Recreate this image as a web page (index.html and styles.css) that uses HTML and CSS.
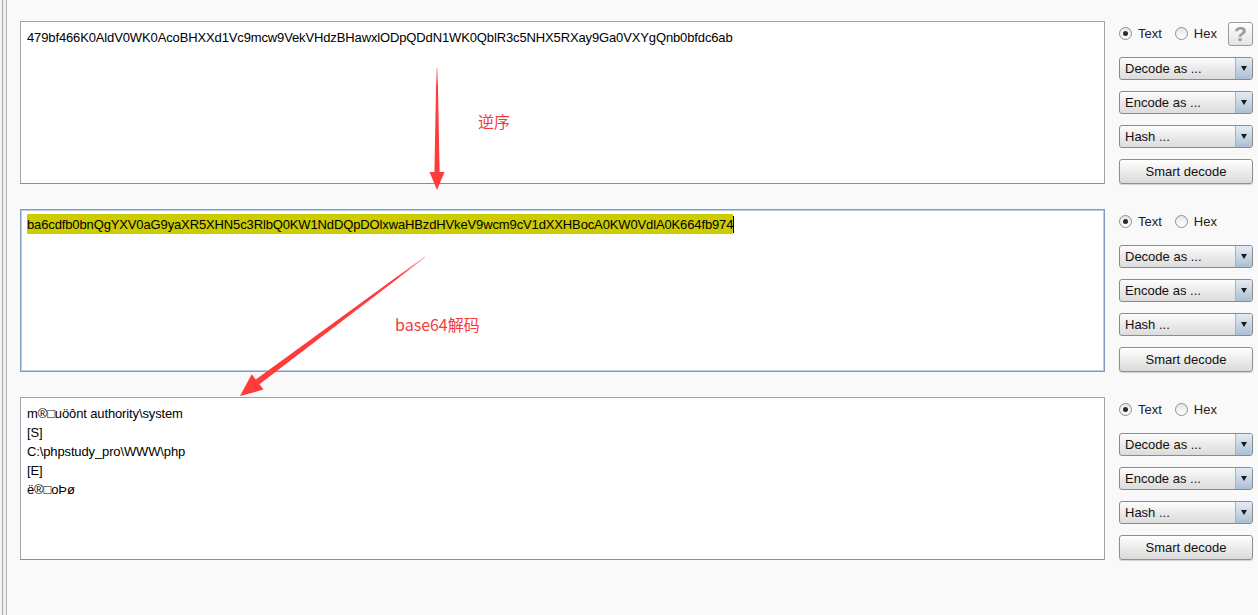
FILE: index.html
```html
<!DOCTYPE html>
<html lang="en">
<head>
    <meta charset="UTF-8">
    <title>Decoder</title>
    <link rel="stylesheet" href="styles.css">
</head>
<body>
    <div class="decoder">
        <div class="panel">
            <div class="text-box">479bf466K0AldV0WK0AcoBHXXd1Vc9mcw9VekVHdzBHawxlODpQDdN1WK0QblR3c5NHX5RXay9Ga0VXYgQnb0bfdc6ab</div>
            <div class="controls">
                <div class="mode-row">
                    <label class="radio checked"><span class="dot"></span>Text</label>
                    <label class="radio"><span class="dot"></span>Hex</label>
                    <button class="help-button">?</button>
                </div>
                <div class="select">Decode as ...<span class="select-arrow"></span></div>
                <div class="select">Encode as ...<span class="select-arrow"></span></div>
                <div class="select">Hash ...<span class="select-arrow"></span></div>
                <button class="smart-button">Smart decode</button>
            </div>
        </div>

        <div class="panel">
            <div class="text-box focused"><span class="selection">ba6cdfb0bnQgYXV0aG9yaXR5XHN5c3RlbQ0KW1NdDQpDOlxwaHBzdHVkeV9wcm9cV1dXXHBocA0KW0VdlA0K664fb974</span><span class="caret"></span></div>
            <div class="controls">
                <div class="mode-row">
                    <label class="radio checked"><span class="dot"></span>Text</label>
                    <label class="radio"><span class="dot"></span>Hex</label>
                </div>
                <div class="select">Decode as ...<span class="select-arrow"></span></div>
                <div class="select">Encode as ...<span class="select-arrow"></span></div>
                <div class="select">Hash ...<span class="select-arrow"></span></div>
                <button class="smart-button">Smart decode</button>
            </div>
        </div>

        <div class="panel">
            <div class="text-box">m®□uöônt authority\system<br>[S]<br>C:\phpstudy_pro\WWW\php<br>[E]<br>ë®□oÞø</div>
            <div class="controls">
                <div class="mode-row">
                    <label class="radio checked"><span class="dot"></span>Text</label>
                    <label class="radio"><span class="dot"></span>Hex</label>
                </div>
                <div class="select">Decode as ...<span class="select-arrow"></span></div>
                <div class="select">Encode as ...<span class="select-arrow"></span></div>
                <div class="select">Hash ...<span class="select-arrow"></span></div>
                <button class="smart-button">Smart decode</button>
            </div>
        </div>
    </div>

    <!-- red annotations drawn over the screenshot -->
    <svg class="annotations" width="1258" height="615" viewBox="0 0 1258 615">
        <defs>
            <linearGradient id="fadeTop" x1="0" y1="0" x2="0" y2="1">
                <stop offset="0" stop-color="#ff3b3b" stop-opacity="0.4"/>
                <stop offset="0.15" stop-color="#ff3b3b"/>
            </linearGradient>
            <linearGradient id="fadeTail" x1="1" y1="0" x2="0" y2="1">
                <stop offset="0" stop-color="#ff3b3b" stop-opacity="0.3"/>
                <stop offset="0.15" stop-color="#ff3b3b"/>
            </linearGradient>
        </defs>
        <polygon fill="url(#fadeTop)" points="436.4,68 437.6,68 439.6,172 444.5,172 437,190 429.5,172 434.4,172"/>
        <polygon fill="url(#fadeTail)" points="425.3,257.4 259.4,384.2 263.5,389.6 240,396 251.7,374.2 255.8,379.4 424.7,256.6"/>
    </svg>
    <div class="note note-reverse">逆序</div>
    <div class="note note-base64">base64解码</div>
</body>
</html>
```

FILE: styles.css
```css
body {
    margin: 0;
    height: 615px;
    overflow: hidden;
    font-family: "Liberation Sans", Arial, sans-serif;
    font-size: 13px;
    color: #000;
    background: linear-gradient(to right, #f2f2f2 0 2px, #a8a8a8 2px 3px, #efefef 3px 6px, #b4b4b4 6px 7px, #f9f9f9 7px);
    position: relative;
}

.decoder {
    display: flex;
    flex-direction: column;
    gap: 25px;
    padding: 21px 0 0 20px;
}

.panel {
    display: flex;
    gap: 14px;
    height: 163px;
}

.text-box {
    width: 1085px;
    box-sizing: border-box;
    background: #fff;
    border: 1px solid #a3a3a8;
    border-bottom-color: #8c8c94;
    padding: 6px 6px;
    line-height: 19px;
    letter-spacing: -0.13px;
    white-space: nowrap;
}

.text-box.focused {
    border-color: #7d9cc0;
    box-shadow: inset 0 0 0 1px #b9cce2;
    padding-top: 5px;
}

.selection {
    background: #cccc00;
    padding: 3px 0 2px;
}

.caret {
    display: inline-block;
    width: 1px;
    height: 17px;
    background: #000;
    vertical-align: -4px;
}

.controls {
    width: 134px;
    display: flex;
    flex-direction: column;
    gap: 11px;
}

.mode-row {
    height: 25px;
    display: flex;
    align-items: center;
}

.radio {
    display: flex;
    align-items: center;
    gap: 6px;
    margin-right: 13px;
    color: #222;
}

.radio + .radio {
    margin-right: 0;
}

.dot {
    width: 11px;
    height: 11px;
    border: 1px solid #8e8f8f;
    border-radius: 50%;
    background: linear-gradient(#e6e6e6, #ffffff);
    position: relative;
}

.radio.checked .dot::after {
    content: "";
    position: absolute;
    left: 3px;
    top: 3px;
    width: 5px;
    height: 5px;
    border-radius: 50%;
    background: #2b2b2b;
}

.help-button {
    margin-left: auto;
    width: 25px;
    height: 24px;
    margin-top: 1px;
    padding: 0;
    border: 1px solid #9a9a9a;
    border-radius: 3px;
    background: linear-gradient(#ffffff, #e3e3e3);
    color: #9b9b9b;
    font-family: "Liberation Sans", Arial, sans-serif;
    font-size: 21px;
    font-weight: bold;
    line-height: 20px;
}

.select {
    height: 23px;
    box-sizing: border-box;
    border: 1px solid #8b8b8b;
    border-radius: 3px;
    background: linear-gradient(#fdfdfd, #e9e9e9 55%, #dcdcdc);
    padding-left: 5px;
    line-height: 21px;
    display: flex;
    color: #111;
}

.select-arrow {
    margin-left: auto;
    width: 16px;
    border-left: 1px solid #a5b3c2;
    border-radius: 0 2px 2px 0;
    background: linear-gradient(#e4ecf4, #aabfd4);
    position: relative;
}

.select-arrow::after {
    content: "";
    position: absolute;
    left: 4.5px;
    top: 8px;
    border-left: 3.5px solid transparent;
    border-right: 3.5px solid transparent;
    border-top: 5px solid #1a1a1a;
}

.smart-button {
    height: 25px;
    padding: 0;
    border: 1px solid #8f8f8f;
    border-radius: 3px;
    background: linear-gradient(#ffffff, #ececec 50%, #dadada);
    box-shadow: 0 1px 1px rgba(0, 0, 0, 0.15);
    font-family: "Liberation Sans", Arial, sans-serif;
    font-size: 13px;
    color: #111;
}

.annotations {
    position: absolute;
    top: 0;
    left: 0;
    pointer-events: none;
}

.note {
    position: absolute;
    color: #f43b3b;
    font-family: "Noto Sans CJK SC", "Noto Sans", sans-serif;
    font-size: 16px;
    line-height: 20px;
}

.note-reverse {
    left: 478px;
    top: 111px;
}

.note-base64 {
    left: 395px;
    top: 314px;
}
```
